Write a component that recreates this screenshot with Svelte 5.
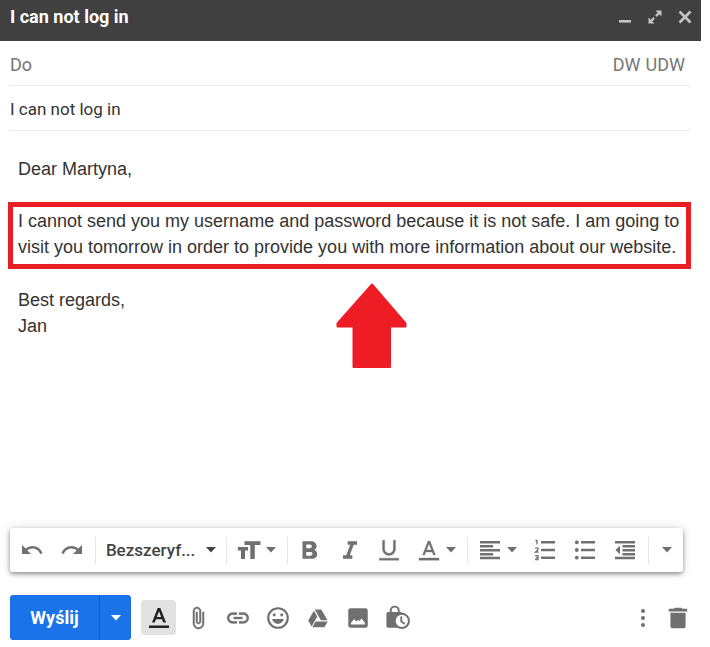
<script>
	let subject = "I can not log in";
	let to = "";
	let font = "sans";
</script>

<style>
	:global(body) {
		margin: 0;
		background: #fff;
	}

	.compose {
		position: relative;
		display: flex;
		flex-direction: column;
		box-sizing: border-box;
		min-height: 100vh;
		padding: 0 9px 7px 0;
		font-family: Roboto, sans-serif;
		font-size: 18px;
		color: #333;
	}

	button,
	input,
	select {
		margin: 0;
		padding: 0;
		border: 0;
		background: none;
		font: inherit;
		color: inherit;
	}

	button {
		display: flex;
		align-items: center;
		justify-content: center;
		cursor: pointer;
	}

	svg {
		display: block;
		flex: none;
		fill: currentColor;
	}

	header {
		display: flex;
		align-items: center;
		height: 33px;
		padding: 0 1px 8px 10px;
		background: #404040;
		color: #fff;
	}

	h1 {
		flex: 1;
		margin: 0;
		font-size: 18px;
		font-weight: 700;
	}

	header button {
		width: 30px;
		height: 30px;
		color: #c4c4c4;
	}

	.field {
		display: flex;
		align-items: center;
		height: 42px;
		margin: 0 11px 0 10px;
		padding-top: 2px;
		border-bottom: 1px solid #e8e8e8;
	}

	.field input {
		flex: 1;
		min-width: 0;
		font-size: 17px;
		outline: none;
	}

	.field label,
	.field button {
		color: #777;
	}

	.copies {
		display: flex;
		gap: 5px;
		padding-right: 5px;
	}

	.message {
		flex: 1;
		padding: 25px 10px 0 8px;
		font-family: "Liberation Sans", Arial, sans-serif;
		font-size: 18px;
		line-height: 26px;
		outline: none;
	}

	.message p {
		margin: 0;
		padding: 0 10px;
	}

	.message .highlight {
		margin: 20px 0 18px;
		padding: 1px 0 4px 5px;
		border: 5px solid #e81e25;
	}

	.arrow {
		position: absolute;
		top: 283px;
		left: 336px;
		color: #ee1c25;
	}

	.format {
		display: flex;
		align-items: center;
		height: 44px;
		margin: 0 18px 23px 10px;
		padding-left: 2px;
		border-radius: 3px;
		box-shadow: 0 2px 4px rgba(0, 0, 0, 0.4), 0 0 12px rgba(0, 0, 0, 0.12);
		color: #707070;
	}

	.format button {
		width: 40px;
		height: 40px;
	}

	.format .wide {
		gap: 5px;
		width: 55px;
	}

	.format .more {
		width: 32px;
	}

	.separator {
		width: 1px;
		height: 27px;
		margin: 0 2px 0 3px;
		background: #e6e6e6;
	}

	.font {
		display: grid;
		align-items: center;
		width: 125px;
		font-size: 17px;
		font-weight: 500;
		color: #444;
	}

	.font select {
		grid-area: 1 / 1;
		appearance: none;
		height: 40px;
		padding-left: 8px;
	}

	.font svg {
		grid-area: 1 / 1;
		justify-self: end;
		margin-right: 7px;
		pointer-events: none;
	}

	.actions {
		display: flex;
		align-items: center;
		margin: 0 6px 0 10px;
		color: #707070;
	}

	.send {
		display: flex;
		gap: 1px;
		margin-right: 10px;
		border-radius: 4px;
		overflow: hidden;
		background: #1558b8;
	}

	.send button {
		height: 45px;
		background: #1a73e8;
		color: #fff;
		font-weight: 700;
	}

	.send .main {
		width: 89px;
	}

	.send .options {
		width: 31px;
	}

	.tool {
		width: 40px;
		height: 35px;
	}

	.tool.active {
		width: 35px;
		margin-right: 2px;
		border-radius: 4px;
		background: #e2e2e2;
		color: #222;
	}

	.tool.last {
		width: 35px;
	}

	.spacer {
		flex: 1;
	}
</style>

{#snippet caret()}
	<svg width="10" height="6" viewBox="0 0 10 6"><path d="M0 0H10L5 5.500Z" /></svg>
{/snippet}

<div class="compose">
	<header>
		<h1>{subject}</h1>
		<button aria-label="Minimalizuj">
			<svg width="14" height="14" viewBox="0 0 14 14"><path d="M1 10H13V12.600H1Z" /></svg>
		</button>
		<button aria-label="Pełny ekran">
			<svg width="14" height="14" viewBox="0 0 14 14">
				<path d="M7.500 .500H13.500V6.500L11.300 4.300L8.700 6.900L7.100 5.300L9.700 2.700ZM.500 7.500L2.700 9.700L5.300 7.100L6.900 8.700L4.300 11.300L6.500 13.500H.500Z" />
			</svg>
		</button>
		<button aria-label="Zamknij">
			<svg width="14" height="14" viewBox="0 0 14 14">
				<path d="M1.500 1.500L12.500 12.500M12.500 1.500L1.500 12.500" stroke="currentColor" stroke-width="2.600" />
			</svg>
		</button>
	</header>

	<div class="field">
		<label for="to">Do</label>
		<input id="to" type="text" bind:value={to} />
		<div class="copies">
			<button>DW</button>
			<button>UDW</button>
		</div>
	</div>
	<div class="field">
		<input type="text" aria-label="Temat" bind:value={subject} />
	</div>

	<div class="message" role="textbox" tabindex="0" aria-label="Treść wiadomości" aria-multiline="true" contenteditable="true">
		<p>Dear Martyna,</p>
		<p class="highlight">
			I cannot send you my username and password because it is not safe. I am going to visit you tomorrow in order to provide you with more information about our website.
		</p>
		<p>Best regards,<br />Jan</p>
	</div>

	<svg class="arrow" width="71" height="85" viewBox="0 0 71 85">
		<path d="M36 1.500L69.500 40.500V43.500H54V84H17.500V43.500H1.500V40.500Z" stroke="currentColor" stroke-width="2" stroke-linejoin="round" />
	</svg>

	<div class="format" role="toolbar" aria-label="Formatowanie">
		<button aria-label="Cofnij">
			<svg width="24" height="24" viewBox="0 0 24 24">
				<path d="M12.500 8c-2.650 0-5.050.990-6.900 2.600L2 7v9h9l-3.620-3.620c1.390-1.160 3.160-1.880 5.120-1.880 3.540 0 6.550 2.310 7.600 5.500l2.370-.780C21.080 11.030 17.150 8 12.500 8z" />
			</svg>
		</button>
		<button aria-label="Ponów">
			<svg width="24" height="24" viewBox="0 0 24 24">
				<path d="M18.400 10.600C16.550 8.990 14.150 8 11.500 8c-4.650 0-8.580 3.030-9.960 7.220L3.900 16c1.050-3.190 4.050-5.500 7.600-5.500 1.950 0 3.730.720 5.120 1.880L13 16h9V7l-3.600 3.600z" />
			</svg>
		</button>
		<div class="separator"></div>
		<div class="font">
			<select aria-label="Czcionka" bind:value={font}>
				<option value="sans">Bezszeryf...</option>
			</select>
			{@render caret()}
		</div>
		<div class="separator"></div>
		<button class="wide" aria-label="Rozmiar">
			<svg width="24" height="24" viewBox="0 0 24 24">
				<path d="M7.500 3.200H23.500V7H17.800V21H13.300V7H7.500ZM.800 9H11V12.600H8V21H4V12.600H.800Z" />
			</svg>
			{@render caret()}
		</button>
		<div class="separator"></div>
		<button aria-label="Pogrubienie">
			<svg width="30" height="30" viewBox="0 0 24 24">
				<path d="M15.600 11.790c.970-.670 1.650-1.770 1.650-2.790 0-2.260-1.750-4-4-4H6v14h8.040c2.090 0 3.710-1.700 3.710-3.790 0-1.520-.860-2.820-2.150-3.420zM9 7.500h3c.830 0 1.500.670 1.500 1.500s-.670 1.500-1.500 1.500H9v-3zm3.500 9H9v-3h3.500c.830 0 1.500.670 1.500 1.500s-.670 1.500-1.500 1.500z" />
			</svg>
		</button>
		<button aria-label="Kursywa">
			<svg width="28" height="28" viewBox="0 0 24 24">
				<path d="M10 4.500v3h2.210l-3.420 9H6v3h8v-3h-2.210l3.420-9H18v-3z" />
			</svg>
		</button>
		<button aria-label="Podkreślenie">
			<svg width="26" height="26" viewBox="0 0 24 24">
				<path d="M12 17c3.310 0 6-2.690 6-6V3h-2v8c0 2.200-1.800 4-4 4s-4-1.800-4-4V3H6v8c0 3.310 2.690 6 6 6zM3 19.500v2h18v-2z" stroke="currentColor" stroke-width=".3" />
			</svg>
		</button>
		<button class="wide" aria-label="Kolor tekstu">
			<svg width="24" height="24" viewBox="0 0 24 24">
				<path d="M11 3L5.500 17h2.200l1.100-3h6.400l1.100 3h2.200L13 3h-2zm-1.400 9L12 5.700 14.400 12H9.600zM2 20h20v2.300H2z" stroke="currentColor" stroke-width=".3" />
			</svg>
			{@render caret()}
		</button>
		<div class="separator"></div>
		<button class="wide" aria-label="Wyrównanie">
			<svg width="24" height="24" viewBox="0 0 24 24">
				<path d="M2 3h20v2.500H2zM2 7h13v2.500H2zM2 11h20v2.500H2zM2 15h13v2.500H2zM2 18.700h20v2.500H2z" />
			</svg>
			{@render caret()}
		</button>
		<button aria-label="Lista numerowana">
			<svg width="24" height="24" viewBox="0 0 24 24">
				<path d="M8 3h14v2.500H8zM8 10.700h14v2.500H8zM8 18.500h14V21H8z" />
				<path d="M2.500 2.500H4V6.500M2 10.200H5V11.800L2.500 14H5.500M2 17.700H5V21.500H2M3 19.600H5" fill="none" stroke="currentColor" stroke-width="1.300" />
			</svg>
		</button>
		<button aria-label="Lista punktowana">
			<svg width="24" height="24" viewBox="0 0 24 24">
				<path d="M8 3h14v2.500H8zM8 10.700h14v2.500H8zM8 18.500h14V21H8z" />
				<circle cx="3.800" cy="4.300" r="1.900" />
				<circle cx="3.800" cy="12" r="1.900" />
				<circle cx="3.800" cy="19.700" r="1.900" />
			</svg>
		</button>
		<button aria-label="Zmniejsz wcięcie">
			<svg width="24" height="24" viewBox="0 0 24 24">
				<path d="M2 3h20v2.500H2zM9.500 7H22v2.500H9.500zM9.500 11H22v2.500H9.500zM9.500 15H22v2.500H9.500zM2 18.700h20v2.500H2zM2.500 12L7 7.700v8.600z" />
			</svg>
		</button>
		<div class="separator"></div>
		<button class="more" aria-label="Więcej opcji formatowania">{@render caret()}</button>
	</div>

	<div class="actions">
		<div class="send">
			<button class="main">Wyślij</button>
			<button class="options" aria-label="Więcej opcji wysyłania">{@render caret()}</button>
		</div>
		<button class="tool active" aria-label="Opcje formatowania">
			<svg width="24" height="24" viewBox="0 0 24 24">
				<path d="M10.700 2L5 16.500h2.800l1.200-3.200h6l1.200 3.200H19L13.300 2h-2.600zm-.900 9L12 5.200l2.200 5.800H9.800zM2 19.500h20V22H2z" />
			</svg>
		</button>
		<button class="tool" aria-label="Załącz pliki">
			<svg width="24" height="24" viewBox="0 0 24 24">
				<path d="M16.500 6v11.500c0 2.210-1.790 4-4 4s-4-1.790-4-4V5c0-1.380 1.120-2.500 2.500-2.500s2.500 1.120 2.500 2.500v10.500c0 .550-.450 1-1 1s-1-.450-1-1V6H10v9.500c0 1.380 1.120 2.500 2.500 2.500s2.500-1.120 2.500-2.500V5c0-2.210-1.790-4-4-4S7 2.790 7 5v12.500c0 3.040 2.460 5.500 5.500 5.500s5.500-2.460 5.500-5.500V6h-1.500z" stroke="currentColor" stroke-width=".5" />
			</svg>
		</button>
		<button class="tool" aria-label="Wstaw link">
			<svg width="26" height="26" viewBox="0 0 24 24">
				<path d="M3.900 12c0-1.710 1.390-3.100 3.100-3.100h4V7H7c-2.760 0-5 2.240-5 5s2.240 5 5 5h4v-1.900H7c-1.710 0-3.100-1.390-3.100-3.100zM8 13h8v-2H8v2zm9-6h-4v1.900h4c1.710 0 3.100 1.390 3.100 3.100s-1.390 3.100-3.100 3.100h-4V17h4c2.760 0 5-2.240 5-5s-2.240-5-5-5z" stroke="currentColor" stroke-width=".3" />
			</svg>
		</button>
		<button class="tool" aria-label="Wstaw emotikony">
			<svg width="26" height="26" viewBox="0 0 24 24">
				<path d="M12 2a10 10 0 1 0 0 20 10 10 0 0 0 0-20zm0 18a8 8 0 1 1 0-16 8 8 0 0 1 0 16zM8.500 7.700a1.400 1.400 0 1 0 0 2.800 1.400 1.400 0 0 0 0-2.800zm7 0a1.400 1.400 0 1 0 0 2.800 1.400 1.400 0 0 0 0-2.800zM6.500 13c.800 2.700 2.900 4.500 5.500 4.500s4.700-1.800 5.500-4.500z" />
			</svg>
		</button>
		<button class="tool" aria-label="Wstaw pliki z Dysku">
			<svg width="24" height="24" viewBox="0 0 24 24">
				<path d="M8.700 3.500H15.300L21.500 14.300H14.900ZM7.900 4.700L11.300 10.600L5.600 20.500L2.200 14.600ZM9.600 15.400H21.700L18.400 21.200H6.300Z" />
			</svg>
		</button>
		<button class="tool" aria-label="Wstaw zdjęcie">
			<svg width="26" height="26" viewBox="0 0 24 24">
				<path d="M21 19V5c0-1.100-.900-2-2-2H5c-1.100 0-2 .900-2 2v14c0 1.100.900 2 2 2h14c1.100 0 2-.900 2-2zM5.500 18v-1.500L8.500 13l2 2.500 1.500-2 1.300 1.500 2-2.500 3.200 4V18z" />
			</svg>
		</button>
		<button class="tool" aria-label="Tryb poufny">
			<svg width="26" height="26" viewBox="0 0 24 24">
				<path d="M5.300 7V5.200a3.700 3.700 0 0 1 7.400 0V7" fill="none" stroke="currentColor" stroke-width="1.800" />
				<path d="M3 6.500H15.500V21H3C2 21 1.300 20.300 1.300 19.300V8.200C1.300 7.200 2 6.500 3 6.500Z" />
				<circle cx="15.500" cy="14.700" r="6.600" fill="#fff" stroke="currentColor" stroke-width="1.900" />
				<path d="M15 10.500V15.200L18.300 17.500" fill="none" stroke="currentColor" stroke-width="1.700" />
			</svg>
		</button>
		<div class="spacer"></div>
		<button class="tool last" aria-label="Więcej opcji">
			<svg width="24" height="24" viewBox="0 0 24 24">
				<circle cx="12" cy="5" r="2" />
				<circle cx="12" cy="12" r="2" />
				<circle cx="12" cy="19" r="2" />
			</svg>
		</button>
		<button class="tool last" aria-label="Odrzuć wersję roboczą">
			<svg width="26" height="26" viewBox="0 0 24 24">
				<path d="M5 7.200h14V19.500c0 1.100-.900 2-2 2H7c-1.100 0-2-.900-2-2zM3.500 3.500H8l1-1h6l1 1h4.500V6h-17z" />
			</svg>
		</button>
	</div>
</div>
